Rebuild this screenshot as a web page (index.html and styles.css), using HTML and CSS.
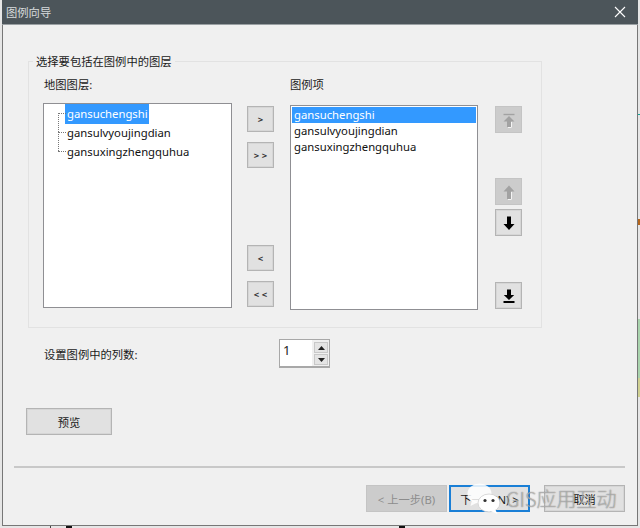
FILE: index.html
```html
<!DOCTYPE html>
<html lang="zh">
<head>
<meta charset="utf-8">
<title>图例向导</title>
<link rel="stylesheet" href="styles.css">
</head>
<body>
<div class="dialog">
  <header class="titlebar">
    <span>图例向导</span>
    <svg class="close" width="12" height="12" viewBox="0 0 12 12"><path d="M1 1l10 10M11 1L1 11" stroke="#fff" stroke-width="1.1" fill="none"/></svg>
  </header>
  <main class="content">
    <section class="group">
      <div class="legend">选择要包括在图例中的图层</div>
      <div class="col col-left">
        <div class="label">地图图层:</div>
        <div class="list tree">
          <div class="node"><span class="sel">gansuchengshi</span></div>
          <div class="node">gansulvyoujingdian</div>
          <div class="node">gansuxingzhengquhua</div>
        </div>
      </div>
      <div class="movers">
        <button class="btn small">&gt;</button>
        <button class="btn small">&gt; &gt;</button>
        <button class="btn small push">&lt;</button>
        <button class="btn small">&lt; &lt;</button>
      </div>
      <div class="col col-right">
        <div class="label">图例项</div>
        <div class="list items">
          <div class="item sel">gansuchengshi</div>
          <div class="item">gansulvyoujingdian</div>
          <div class="item">gansuxingzhengquhua</div>
        </div>
      </div>
      <div class="orders">
        <button class="btn icon off"><svg width="16" height="16" viewBox="0 0 16 16"><path d="M2.5 2.5h11" stroke="#a2a2a2" stroke-width="1.4"/><path d="M8 4L13.5 9.5H10V15H6V9.5H2.5z" fill="#a2a2a2"/><path d="M10.5 15.5H7M10.5 10v5" stroke="#f4f4f4"/></svg></button>
        <button class="btn icon off gap-a"><svg width="16" height="16" viewBox="0 0 16 16"><path d="M8 1.5L13.5 7.5H10V15H6V7.5H2.5z" fill="#a2a2a2"/><path d="M10.5 15.5H7M10.5 8v7" stroke="#f4f4f4"/></svg></button>
        <button class="btn icon"><svg width="16" height="16" viewBox="0 0 16 16"><path d="M8 15L2.5 9H6V1.5H10V9H13.5z" fill="#000"/></svg></button>
        <button class="btn icon gap-b"><svg width="16" height="16" viewBox="0 0 16 16"><path d="M8 12L2.8 7H6V1.5H10V7H13.2z" fill="#000"/><path d="M2.5 14h11" stroke="#000" stroke-width="2"/></svg></button>
      </div>
    </section>
    <div class="columns-row">
      <span>设置图例中的列数:</span>
      <div class="spinner">
        <span class="spin-value">1</span>
        <div class="spin-btns">
          <span class="spin-btn"><svg width="7" height="4" viewBox="0 0 7 4"><path d="M3.5 0L7 4H0z" fill="#222"/></svg></span>
          <span class="spin-btn"><svg width="7" height="4" viewBox="0 0 7 4"><path d="M0 0H7L3.5 4z" fill="#222"/></svg></span>
        </div>
      </div>
    </div>
    <button class="btn preview">预览</button>
    <hr class="rule">
    <footer class="actions">
      <button class="btn action off">&lt; 上一步(B)</button>
      <button class="btn action primary">下一步(N) &gt;</button>
      <button class="btn action cancel">取消</button>
    </footer>
  </main>
  <div class="watermark">
    <svg class="wechat" width="36" height="31" viewBox="0 0 36 31"><ellipse cx="12.5" cy="10.5" rx="12" ry="10" fill="#fff" fill-opacity=".85"/><path d="M5 17l-1.5 6 7-3.5z" fill="#fff" fill-opacity=".85"/><ellipse cx="22" cy="20" rx="11" ry="9" fill="#fff" stroke="#cfcfcf" stroke-width=".8"/><path d="M28 26l2.5 5-7-3z" fill="#fff"/><circle cx="18" cy="17.5" r="1.6" fill="#333"/><circle cx="26" cy="17.5" r="1.6" fill="#333"/></svg>
    <span>GIS应用互动</span>
  </div>
</div>
</body>
</html>
```
FILE: styles.css
```css
* { box-sizing: border-box; }
html, body { margin: 0; height: 528px; overflow: hidden; }
body {
  background:
    linear-gradient(#12a59a, #12a59a) 638px 114px / 2px 1px no-repeat,
    linear-gradient(#b5661c, #b5661c) 638px 219px / 2px 6px no-repeat,
    linear-gradient(#a9d3ad, #a9d3ad) 638px 319px / 2px 59px no-repeat,
    linear-gradient(#cfd092, #cfd092) 638px 378px / 2px 19px no-repeat,
    linear-gradient(#111, #111) 66px 526px / 6px 2px no-repeat,
    linear-gradient(#444, #444) 50px 526px / 1px 2px no-repeat,
    linear-gradient(#111, #111) 399px 526px / 6px 2px no-repeat,
    #e6e6e6;
  font-family: "Noto Sans", "Noto Sans CJK SC", sans-serif;
  font-size: 11.3px;
  color: #1a1a1a;
  padding-left: 2px;
}
.dialog {
  position: relative;
  width: 636px;
  height: 526px;
  background: #f0f0f0;
  border: 1px solid #777;
  border-top: 0;
  display: flex;
  flex-direction: column;
}
.titlebar {
  height: 25px;
  flex: none;
  background: #4c555a;
  border-bottom: 1px solid #9aa0a3;
  color: #d8dcdd;
  padding: 0 12px 0 4px;
  display: flex;
  align-items: center;
  justify-content: space-between;
  margin-left: -1px;
  margin-right: -1px;
}
.content {
  flex: 1;
  display: flex;
  flex-direction: column;
  padding: 36px 12px 13px 11px;
  min-height: 0;
}
.group {
  position: relative;
  margin-left: 14px;
  width: 514px;
  height: 267px;
  flex: none;
  border: 1px solid #e2e2e2;
  display: flex;
  padding: 15px 0 0 14px;
}
.legend {
  position: absolute;
  left: 4px;
  top: -9px;
  padding: 0 3px;
  background: #f0f0f0;
  line-height: 18px;
}
.col { display: flex; flex-direction: column; flex: none; }
.col-left { width: 189px; }
.col-right { width: 188px; margin-left: 16px; }
.label { line-height: 16px; padding-left: 1px; }
.col-left .label { margin-bottom: 10px; }
.col-right .label { margin-bottom: 12px; padding-left: 0; }
.list {
  background: #fff;
  border: 1px solid #8f8f93;
  color: #111;
}
.tree { height: 205px; padding: 0 0 0 22px; position: relative; }
.node { position: relative; height: 19px; line-height: 19px; }
.node::before {
  content: "";
  position: absolute;
  left: -8px;
  top: 9px;
  width: 8px;
  border-top: 1px dotted #777;
}
.node + .node::after {
  content: "";
  position: absolute;
  left: -8px;
  top: -10px;
  height: 19px;
  border-left: 1px dotted #777;
}
.sel { background: #3399ff; color: #fff; }
.tree .sel { display: inline-block; height: 20px; padding: 0 1px 0 2px; margin-left: -1px; }
.node:not(:first-child) { padding-left: 1px; }
.items { height: 205px; padding: 1px; }
.item { height: 16px; line-height: 16px; padding-left: 2px; }
.btn {
  font: inherit;
  color: #1a1a1a;
  background: #e1e1e1;
  border: 1px solid #b4b4b4;
  box-shadow: inset 0 0 0 1px #d6d6d6;
  padding: 0;
  display: flex;
  align-items: center;
  justify-content: center;
  flex: none;
}
.movers {
  margin-left: 15px;
  width: 27px;
  flex: none;
  display: flex;
  flex-direction: column;
  gap: 10px;
  padding: 29px 0 20px;
  height: 246px;
}
.small { width: 27px; height: 26px; font-size: 9.5px; font-weight: 700; color: #333; }
.push { margin-top: 67px; }
.orders {
  margin-left: 17px;
  width: 27px;
  flex: none;
  display: flex;
  flex-direction: column;
  padding-top: 29px;
}
.icon { width: 27px; height: 27px; }
.off { background: #cccccc; border-color: #c4c4c4; box-shadow: none; color: #8a8a8a; }
.gap-a { margin-top: 45px; margin-bottom: 4px; }
.gap-b { margin-top: 46px; }
.columns-row {
  display: flex;
  align-items: center;
  margin-top: 11px;
  padding-left: 30px;
  height: 29px;
  flex: none;
}
.columns-row > span:first-child { width: 235px; }
.spinner {
  width: 51px;
  height: 29px;
  background: #fff;
  border: 1px solid #a8a8a8;
  border-bottom-width: 2px;
  display: flex;
  justify-content: space-between;
}
.spin-value { padding: 2px 0 0 3px; font-size: 13px; line-height: 16px; color: #222; }
.spin-btns {
  width: 17px;
  background: #f0f0f0;
  display: flex;
  flex-direction: column;
  gap: 1px;
  padding: 2px 1px 1px 2px;
}
.spin-btn {
  flex: 1;
  background: #e4e4e4;
  border: 1px solid #c8c8c8;
  display: flex;
  align-items: center;
  justify-content: center;
}
.spin-btn svg { display: block; }
.preview { width: 86px; height: 27px; margin: 40px 0 0 12px; }
.rule {
  width: 611px;
  height: 2px;
  margin: 31px 0 0;
  border: 0;
  background: #c8c8c8;
  flex: none;
}
.actions {
  display: flex;
  margin-top: 17px;
  padding-left: 352px;
  gap: 2px;
}
.action { width: 81px; height: 27px; }
.action.off { color: #8c8c8c; }
.primary { border: 2px solid #1a7fd6; box-shadow: none; }
.cancel { margin-left: 12px; }
.watermark {
  position: absolute;
  left: 464px;
  top: 483px;
  display: flex;
  align-items: center;
  color: rgba(255,255,255,.45);
  font-size: 20px;
  line-height: 30px;
  text-shadow: 0 0 1px #555;
  white-space: nowrap;
  pointer-events: none;
}
.wechat { display: block; margin-right: 3px; }
.watermark span { font-family: "Noto Sans CJK SC", "Noto Sans", sans-serif; font-weight: 300; }
```
